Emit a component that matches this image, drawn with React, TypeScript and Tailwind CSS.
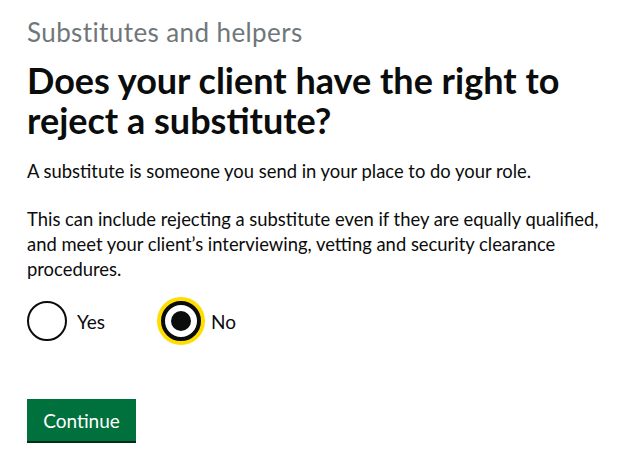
const App = () => {
  return (
    <div className="min-h-screen bg-white text-[#0b0c0c] font-['Lato',sans-serif]">
      <main className="w-[620px] pl-[27px] pt-[17px]">
        <span className="block text-[26px] leading-[30px] tracking-[0.4px] text-[#6f777b]">Substitutes and helpers</span>
        <h1 className="mt-[13px] text-[36px] leading-[40px] font-bold">
          Does your client have the right to reject a substitute?
        </h1>

        <p className="mt-[19px] text-[18.4px] leading-[25px]">
          A substitute is someone you send in your place to do your role.
        </p>
        <p className="mt-[23px] text-[18.4px] leading-[25px]">
          This can include rejecting a substitute even if they are equally qualified, and meet your client’s interviewing, vetting and security clearance procedures.
        </p>

        <div className="mt-[19px] flex items-center">
          <label className="flex items-center">
            <span className="size-[40px] rounded-full border-2 border-[#0b0c0c] bg-white"></span>
            <span className="ml-[10px] text-[19px] leading-[25px]">Yes</span>
          </label>
          <label className="ml-[56px] flex items-center">
            <span className="flex size-[40px] items-center justify-center rounded-full border-4 border-[#0b0c0c] bg-white shadow-[0_0_0_4px_#ffdd00]">
              <span className="size-[20px] rounded-full bg-[#0b0c0c]"></span>
            </span>
            <span className="ml-[10px] text-[19px] leading-[25px]">No</span>
          </label>
        </div>

        <button className="mt-[58px] h-[42px] w-[109px] bg-[#00703c] text-[19px] leading-[25px] text-white shadow-[0_2px_0_#002d18]">
          Continue
        </button>
      </main>
    </div>
  );
};

export default App;
